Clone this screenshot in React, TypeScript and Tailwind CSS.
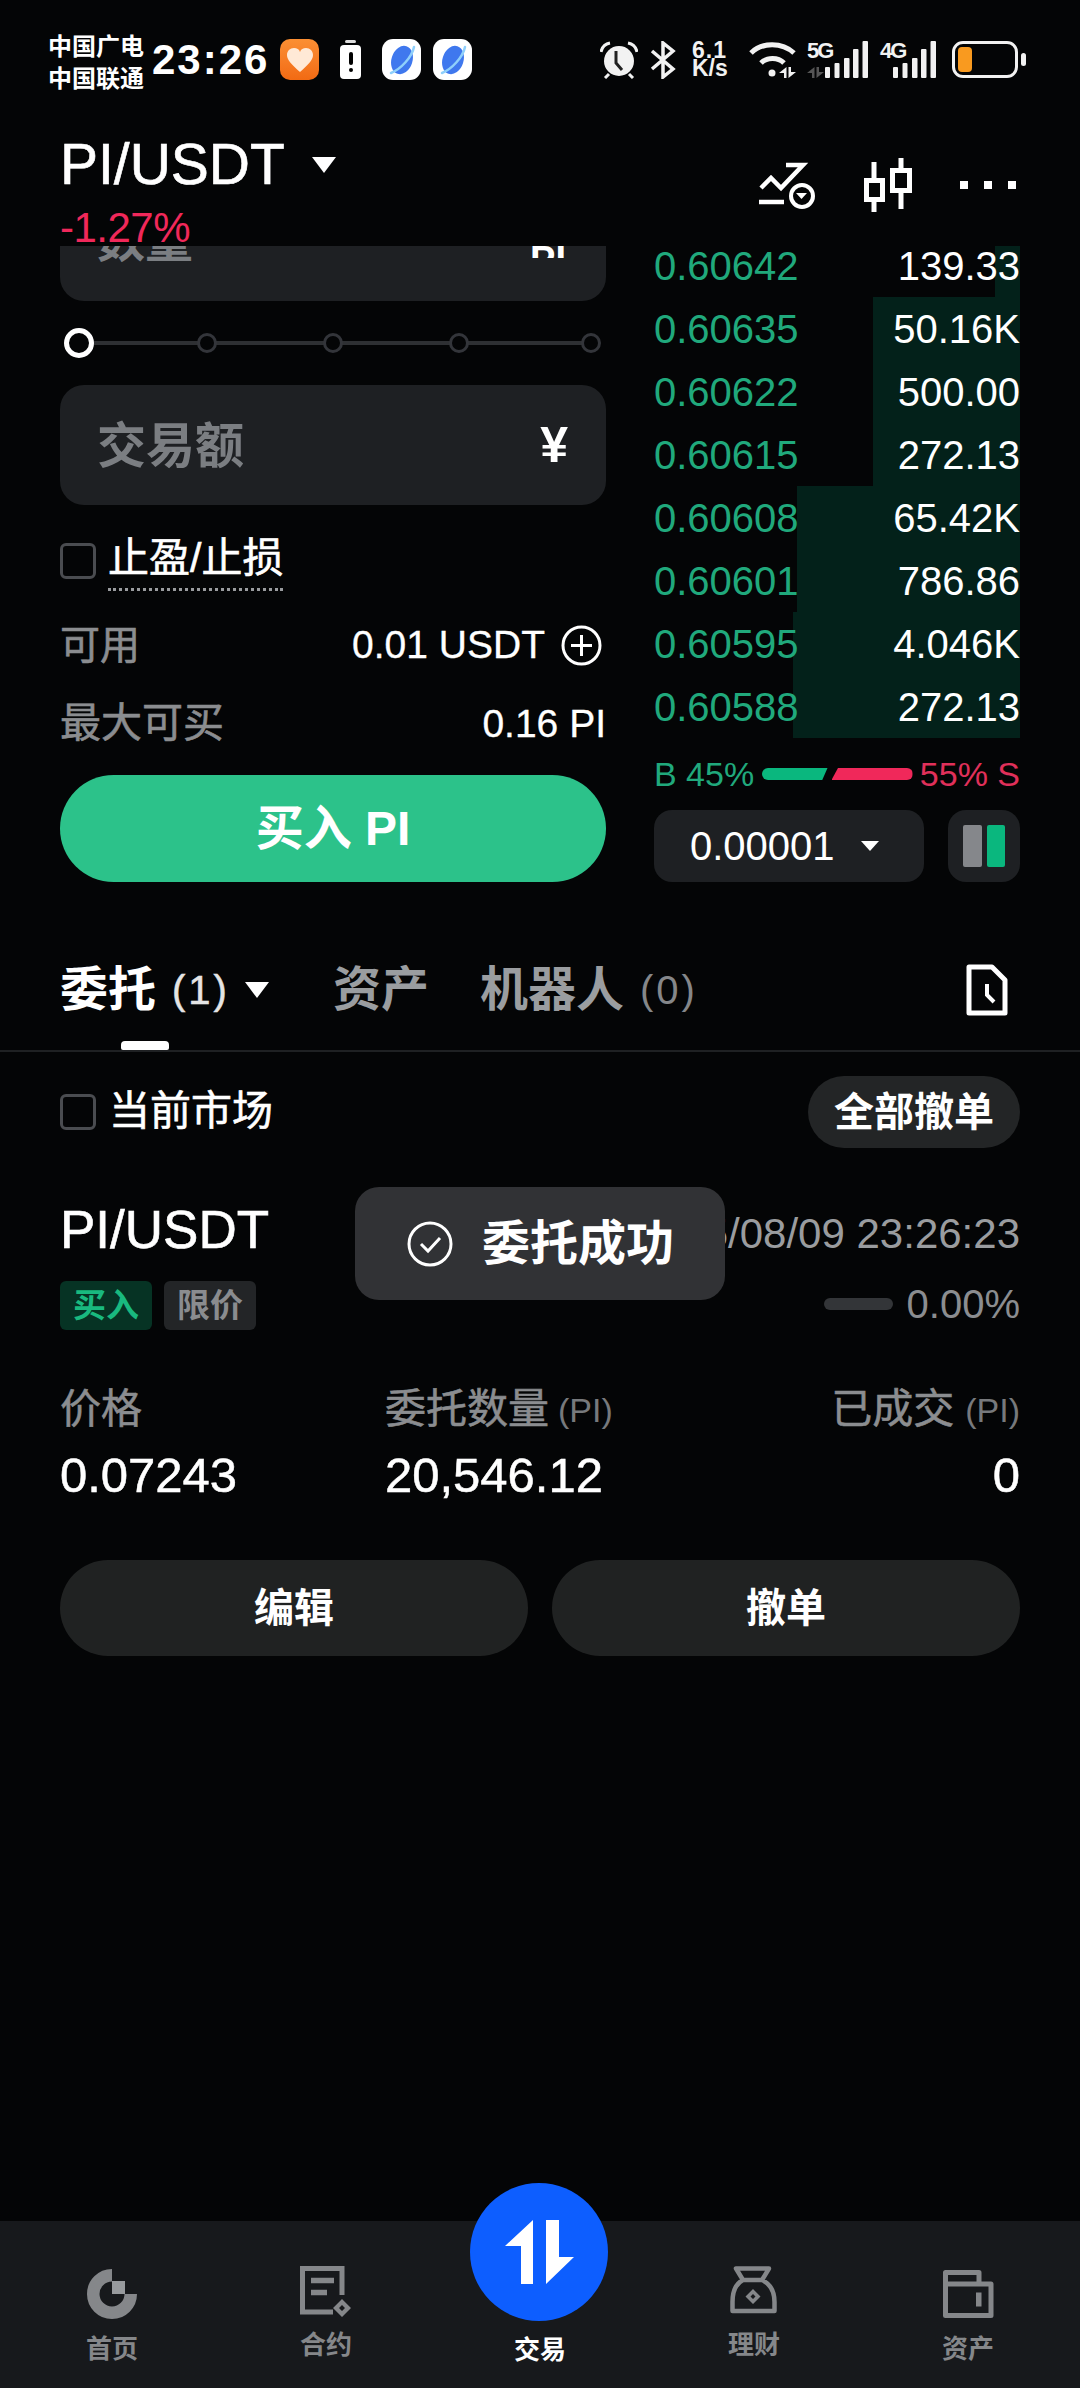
import React from 'react';

const orderBook = [
  { price: '0.60642', size: '139.33', depth: 25 },
  { price: '0.60635', size: '50.16K', depth: 147 },
  { price: '0.60622', size: '500.00', depth: 147 },
  { price: '0.60615', size: '272.13', depth: 147 },
  { price: '0.60608', size: '65.42K', depth: 223 },
  { price: '0.60601', size: '786.86', depth: 223 },
  { price: '0.60595', size: '4.046K', depth: 227 },
  { price: '0.60588', size: '272.13', depth: 227 },
];

const SignalBars = () => (
  <svg width="43" height="37" viewBox="0 0 43 37" fill="#f2f2f2">
    <rect x="0" y="26" width="5" height="11" rx="1" />
    <rect x="9.5" y="22" width="5" height="15" rx="1" />
    <rect x="19" y="17" width="5.5" height="20" rx="1" />
    <rect x="28" y="8" width="5.5" height="29" rx="1" />
    <rect x="37.5" y="0" width="5.5" height="37" rx="1" />
  </svg>
);

const DataArrows = ({ color }: { color: string }) => (
  <svg width="17" height="11" viewBox="0 0 17 11" fill={color}>
    <path d="M7.5 0v11H5V6H0zM9.5 0H12v5h5l-7.5 6z" />
  </svg>
);

const PlanetApp = () => (
  <div className="w-[39px] h-[41px] rounded-[11px] bg-white flex items-center justify-center">
    <svg width="30" height="34" viewBox="0 0 30 34">
      <ellipse cx="15" cy="17" rx="10.5" ry="14.5" transform="rotate(18 15 17)" fill="#3f78ee" />
      <path d="M4 30C14 26 25 14 27 4" stroke="#8fd0fb" strokeWidth="2.5" fill="none" strokeLinecap="round" />
    </svg>
  </div>
);

const StatusBar = () => (
  <div className="h-[120px] pl-[48px] pr-[54px] pt-[31px] flex items-start">
    <div className="w-[104px] text-[24px] leading-[32px] font-bold text-white">
      <div>中国广电</div>
      <div>中国联通</div>
    </div>
    <span className="mt-[5px] text-[42px] leading-[48px] font-bold tracking-[2px] text-white">23:26</span>
    <div className="ml-[11px] mt-[8px] flex items-center">
      <div className="w-[39px] h-[41px] rounded-[10px] bg-gradient-to-b from-[#fb8f33] to-[#f26a12] flex items-center justify-center">
        <svg width="28" height="26" viewBox="0 0 28 26">
          <path d="M14 25C6 18 1 13 1 8c0-4 3-7 7-7 3 0 5 1 6 4 1-3 3-4 6-4 4 0 7 3 7 7 0 5-5 10-13 17z" fill="#ffe9d6" />
        </svg>
      </div>
      <div className="ml-[21px] w-[21px] h-[39px] relative flex flex-col items-center">
        <div className="w-[11px] h-[3px] bg-[#ddd] rounded-sm" />
        <div className="mt-[2px] w-[21px] h-[34px] bg-white rounded-[4px] flex flex-col items-center justify-center gap-[3px]">
          <div className="w-[4px] h-[13px] bg-black rounded-sm" />
          <div className="w-[4px] h-[4px] bg-black rounded-full" />
        </div>
      </div>
      <div className="ml-[21px]"><PlanetApp /></div>
      <div className="ml-[12px]"><PlanetApp /></div>
    </div>
    <div className="ml-auto mt-[10px] flex items-start">
      <svg width="38" height="38" viewBox="0 0 38 38" fill="none" stroke="#f2f2f2">
        <circle cx="19" cy="20" r="15" fill="#f2f2f2" stroke="none" />
        <path d="M16 10v12l6 7" stroke="#222" strokeWidth="3" />
        <path d="M1 11c1-5 4-8 9-9M37 11c-1-5-4-8-9-9M9 33l-4 4M29 33l4 4" strokeWidth="3" />
      </svg>
      <svg className="ml-[12px]" width="26" height="38" viewBox="0 0 26 38" fill="none" stroke="#f2f2f2" strokeWidth="3.5">
        <path d="M2 10l21 18-10 8V2l10 8L2 28" />
      </svg>
      <div className="ml-[16px] w-[40px] text-[23px] leading-[18px] font-bold text-[#f2f2f2]">
        <div className="tracking-[1px]">6.1</div>
        <div>K/s</div>
      </div>
      <div className="ml-[17px] relative w-[47px] h-[37px]">
        <svg width="47" height="37" viewBox="0 0 47 37" fill="none" stroke="#f2f2f2" strokeWidth="5">
          <path d="M2 12C13 1 33 1 45 12M12 22c6-6 17-6 23 0" />
          <circle cx="23" cy="32" r="3.5" fill="#f2f2f2" stroke="none" />
        </svg>
        <div className="absolute left-[30px] top-[26px]"><DataArrows color="#f2f2f2" /></div>
      </div>
      <div className="ml-[11px] relative w-[62px] h-[37px]">
        <span className="absolute left-0 top-0 text-[22px] leading-[20px] font-bold tracking-[-2px] text-[#f2f2f2]">5G</span>
        <div className="absolute left-0 top-[26px]"><DataArrows color="#555555" /></div>
        <div className="absolute right-[1px] top-0"><SignalBars /></div>
      </div>
      <div className="ml-[11px] relative w-[57px] h-[37px]">
        <span className="absolute left-0 top-0 text-[22px] leading-[20px] font-bold tracking-[-2px] text-[#f2f2f2]">4G</span>
        <div className="absolute right-[1px] top-0"><SignalBars /></div>
      </div>
      <div className="ml-[15px] flex items-center">
        <div className="w-[66px] h-[37px] rounded-[11px] border-[3px] border-[#f2f2f2] p-[3px]">
          <div className="w-[14px] h-full rounded-[4px] bg-[#f99a1f]" />
        </div>
        <div className="ml-[3px] w-[5px] h-[13px] rounded-full bg-[#f2f2f2]" />
      </div>
    </div>
  </div>
);

const Header = () => (
  <div className="h-[126px] relative overflow-hidden px-[60px] text-white">
    <div className="flex items-start h-[88px]">
      <span className="h-[88px] flex items-center text-[57px] leading-none [-webkit-text-stroke:0.6px_currentColor]">PI/USDT</span>
      <div className="ml-[27px] mt-[37px] w-0 h-0 border-x-[12px] border-x-transparent border-t-[16px] border-t-white" />
      <svg className="ml-auto mt-[42px]" width="60" height="48" viewBox="0 0 60 48" fill="none" stroke="#fff" strokeWidth="4.5">
        <path d="M4 26l10-10 10 10L46 3H29" />
        <path d="M2 40h25" />
        <circle cx="45" cy="34" r="11" strokeWidth="4" />
        <path d="M39 31h11l-5.5 6z" fill="#fff" stroke="none" />
      </svg>
      <svg className="ml-[44px] mt-[36px]" width="54" height="58" viewBox="0 0 54 58" fill="none" stroke="#fff" strokeWidth="5">
        <rect x="5.5" y="24.5" width="16" height="19" />
        <path d="M13 6v18.5M13 43.5V56" />
        <rect x="31.5" y="14.5" width="17" height="20" />
        <path d="M40 2v12.5M40 34.5V53" />
      </svg>
      <div className="ml-[45px] mr-[4px] mt-[61px] flex gap-[16px]">
        <div className="w-[8px] h-[8px] bg-white" />
        <div className="w-[8px] h-[8px] bg-white" />
        <div className="w-[8px] h-[8px] bg-white" />
      </div>
    </div>
    <div className="text-[42px] leading-[40px] tracking-[-0.5px] text-[#f0285a]">-1.27%</div>
  </div>
);

const SliderNode = () => <div className="w-[20px] h-[20px] rounded-full border-[3px] border-[#33353a] bg-[#040506]" />;

const TradeForm = () => (
  <div className="overflow-hidden h-[636px]">
    <div className="-mt-[65px]">
      <div className="relative h-[120px] rounded-[24px] bg-[#1e2023] flex items-center pl-[37px]">
        <span className="text-[48px] font-bold text-[#7b7e82]">数量</span>
        <span className="absolute right-[40px] top-[65px] h-[12px] overflow-hidden text-[38px] leading-none font-bold text-white">
          <span className="block -mt-[5px]">PI</span>
        </span>
      </div>
      <div className="relative mt-[27px] h-[30px] flex items-center pl-[4px]">
        <div className="absolute left-[30px] right-[10px] top-[13px] h-[4px] bg-[#2e3033]" />
        <div className="relative w-[30px] h-[30px] rounded-full border-[5px] border-white bg-[#040506]" />
        <div className="relative ml-[103px] flex gap-[106px]">
          <SliderNode />
          <SliderNode />
          <SliderNode />
        </div>
        <div className="relative ml-[112px]"><SliderNode /></div>
      </div>
      <div className="mt-[27px] h-[120px] rounded-[24px] bg-[#1e2023] flex items-center justify-between pl-[37px] pr-[38px]">
        <span className="mt-[3px] text-[49px] font-bold text-[#7b7e82]">交易额</span>
        <span className="text-[50px] font-bold text-white">¥</span>
      </div>
      <div className="mt-[38px] h-[48px] flex items-start">
        <div className="w-[36px] h-[36px] rounded-[6px] border-[3px] border-[#4a4c50]" />
        <span className="ml-[12px] h-[48px] text-[41px] leading-[30px] text-white border-b-[3px] border-dotted border-[#9a9c9f] [-webkit-text-stroke:0.6px_currentColor]">止盈/止损</span>
      </div>
      <div className="mt-[29px] h-[50px] flex items-center justify-between">
        <span className="text-[40px] text-[#8b8d90] [-webkit-text-stroke:0.6px_currentColor]">可用</span>
        <div className="flex items-center text-white">
          <span className="text-[39px] [-webkit-text-stroke:0.3px_currentColor]">0.01 USDT</span>
          <svg className="ml-[16px] mr-[4px]" width="41" height="41" viewBox="0 0 41 41" fill="none" stroke="#fff" strokeWidth="3">
            <circle cx="20.5" cy="20.5" r="18.5" />
            <path d="M10 20.5h21M20.5 10v21" />
          </svg>
        </div>
      </div>
      <div className="mt-[29px] h-[50px] flex items-center justify-between">
        <span className="text-[41px] text-[#8b8d90] [-webkit-text-stroke:0.6px_currentColor]">最大可买</span>
        <span className="text-[39px] text-white [-webkit-text-stroke:0.3px_currentColor]">0.16 PI</span>
      </div>
      <button className="mt-[26px] w-full h-[107px] rounded-full bg-[#2cc28a] text-[48px] font-bold text-white">买入 PI</button>
    </div>
  </div>
);

const OrderBook = () => (
  <div className="overflow-hidden h-[636px] text-[40px]">
    <div className="-mt-[12px]">
      {orderBook.map((row) => (
        <div key={row.price} className="relative h-[63px] flex items-center justify-between">
          <div className="absolute right-0 top-0 bottom-0 bg-[#03211a]" style={{ width: row.depth }} />
          <span className="relative text-[#20a97c]">{row.price}</span>
          <span className="relative text-white">{row.size}</span>
        </div>
      ))}
    </div>
    <div className="mt-[16px] h-[40px] flex items-center justify-between text-[34px]">
      <span className="text-[#20a97c]">B 45%</span>
      <div className="flex items-center gap-[4px]">
        <div className="w-[66px] h-[12px] bg-[#0ab77e] rounded-l-full [clip-path:polygon(0_0,100%_0,92%_100%,0_100%)]" />
        <div className="w-[81px] h-[12px] bg-[#f0285a] rounded-r-full [clip-path:polygon(8%_0,100%_0,100%_100%,0_100%)]" />
      </div>
      <span className="text-[#e0305a]">55% S</span>
    </div>
    <div className="mt-[16px] flex justify-between">
      <div className="w-[270px] h-[72px] rounded-[18px] bg-[#1e2023] flex items-center pl-[36px] text-white">
        <span>0.00001</span>
        <div className="ml-[26px] w-0 h-0 border-x-[9px] border-x-transparent border-t-[10px] border-t-white" />
      </div>
      <div className="w-[72px] h-[72px] rounded-[18px] bg-[#1e2023] flex items-center justify-center gap-[5px]">
        <div className="w-[19px] h-[42px] rounded-[2px] bg-[#85878b]" />
        <div className="w-[18px] h-[42px] rounded-[2px] bg-[#0ab77e]" />
      </div>
    </div>
  </div>
);

const Tabs = () => (
  <div className="relative h-[170px] pt-[84px] border-b-2 border-[#1f2123] px-[60px]">
    <div className="flex items-center h-[48px]">
      <span className="text-[48px] font-bold text-white">委托</span>
      <span className="ml-[16px] text-[40px] tracking-[3px] text-[#e5e5e5] [-webkit-text-stroke:0.5px_currentColor]">(1)</span>
      <div className="ml-[15px] w-0 h-0 border-x-[12px] border-x-transparent border-t-[16px] border-t-white" />
      <span className="ml-[64px] text-[48px] font-bold text-[#9a9da0]">资产</span>
      <span className="ml-[51px] text-[48px] font-bold text-[#9a9da0]">机器人</span>
      <span className="ml-[16px] text-[40px] tracking-[3px] text-[#85878a]">(0)</span>
      <svg className="ml-auto mr-[12px]" width="42" height="52" viewBox="0 0 42 52" fill="none" stroke="#fff" strokeWidth="5">
        <path d="M3 3h23l13 13v33H3z" strokeLinejoin="round" />
        <path d="M21 20v11l7 7" strokeWidth="4" />
      </svg>
    </div>
    <div className="absolute left-[121px] bottom-0 w-[48px] h-[9px] rounded-t-[4px] rounded-b-[2px] bg-white" />
  </div>
);

const OrderCard = () => (
  <div className="px-[60px]">
    <div className="mt-[24px] h-[72px] flex items-center justify-between">
      <div className="flex items-center">
        <div className="w-[36px] h-[36px] rounded-[6px] border-[3px] border-[#4a4c50]" />
        <span className="ml-[13px] text-[41px] text-white [-webkit-text-stroke:0.6px_currentColor]">当前市场</span>
      </div>
      <button className="w-[212px] h-[72px] rounded-full bg-[#232526] text-[40px] font-bold text-white">全部撤单</button>
    </div>
    <div className="mt-[56px] h-[52px] flex items-center justify-between">
      <span className="text-[53px] text-white [-webkit-text-stroke:0.6px_currentColor]">PI/USDT</span>
      <span className="text-[42px] mt-[6px] text-[#9a9c9f]">2025/08/09 23:26:23</span>
    </div>
    <div className="mt-[25px] h-[49px] flex items-center justify-between">
      <div className="flex gap-[12px]">
        <span className="w-[92px] h-[49px] rounded-[6px] bg-[#063324] text-[#19b97f] text-[33px] font-bold flex items-center justify-center">买入</span>
        <span className="w-[92px] h-[49px] rounded-[6px] bg-[#232527] text-[#8a8c8f] text-[33px] font-bold flex items-center justify-center">限价</span>
      </div>
      <div className="flex items-center -mt-[3px]">
        <div className="w-[69px] h-[12px] rounded-full bg-[#333538]" />
        <span className="ml-[14px] text-[40px] text-[#8b8d90]">0.00%</span>
      </div>
    </div>
    <div className="mt-[60px] grid grid-cols-[325px_1fr_auto]">
      <span className="h-[40px] flex items-center text-[41px] text-[#8b8d90] [-webkit-text-stroke:0.6px_currentColor]">价格</span>
      <span className="h-[40px] flex items-center text-[41px] text-[#8b8d90] [-webkit-text-stroke:0.6px_currentColor]">委托数量<span className="ml-[9px] text-[34px] text-[#77797c] [-webkit-text-stroke:0px]">(PI)</span></span>
      <span className="h-[40px] flex items-center text-[41px] text-[#8b8d90] [-webkit-text-stroke:0.6px_currentColor]">已成交<span className="ml-[11px] text-[34px] text-[#77797c] [-webkit-text-stroke:0px]">(PI)</span></span>
      <span className="mt-[22px] h-[48px] flex items-center text-[49px] text-white [-webkit-text-stroke:0.5px_currentColor]">0.07243</span>
      <span className="mt-[22px] h-[48px] flex items-center text-[49px] text-white [-webkit-text-stroke:0.5px_currentColor]">20,546.12</span>
      <span className="mt-[22px] h-[48px] flex items-center justify-end text-[49px] text-white [-webkit-text-stroke:0.5px_currentColor]">0</span>
    </div>
    <div className="mt-[60px] flex gap-[24px]">
      <button className="flex-1 h-[96px] rounded-full bg-[#202222] text-[40px] font-bold text-white">编辑</button>
      <button className="flex-1 h-[96px] rounded-full bg-[#202222] text-[40px] font-bold text-white">撤单</button>
    </div>
  </div>
);

const NavItem = ({ label, icon, up }: { label: string; icon: React.ReactNode; up?: boolean }) => (
  <div className="flex flex-col items-center w-[120px]">
    <div className="h-[56px] flex items-end">{icon}</div>
    <span className={`text-[26px] font-bold text-[#85878a] ${up ? 'mt-[8px]' : 'mt-[12px]'}`}>{label}</span>
  </div>
);

const BottomNav = () => (
  <div className="mt-auto relative h-[167px] bg-[#17191c] flex justify-between px-[52px] pt-[41px]">
    <NavItem
      label="首页"
      icon={
        <svg className="-mb-[1px]" width="50" height="50" viewBox="0 0 50 50" fill="none">
          <path d="M25 6.25A18.75 18.75 0 1 0 43.75 25" stroke="#85878a" strokeWidth="12.5" />
          <rect x="25" y="12" width="13" height="13" fill="#979a9d" />
        </svg>
      }
    />
    <NavItem
      up
      label="合约"
      icon={
        <svg className="mb-[1px]" width="54" height="52" viewBox="0 0 54 52" fill="none" stroke="#85878a" strokeWidth="5">
          <path d="M34 47H3.5V3.5H43V30" />
          <path d="M12 15.5h23M12 27.5h16" strokeWidth="5.5" />
          <path fillRule="evenodd" d="M43 34l9 9-9 9-9-9zM43 40l-3 3 3 3 3-3z" fill="#85878a" stroke="none" />
        </svg>
      }
    />
    <div className="w-[120px] flex flex-col items-center">
      <div className="h-[56px]" />
      <span className="mt-[13px] text-[26px] font-bold text-white">交易</span>
    </div>
    <NavItem
      up
      label="理财"
      icon={
        <svg className="mb-[3px]" width="52" height="50" viewBox="0 0 52 50" fill="none" stroke="#85878a" strokeWidth="4.5">
          <path d="M8 3.5h33L34 15H15zM15 15C7 19 4.5 27 4.5 37v9h42v-9c0-10-4-18-12.5-22" strokeLinejoin="round" />
          <path fillRule="evenodd" d="M25 24l7.5 7.5L25 39l-7.5-7.5zM25 29l-2.5 2.5L25 34l2.5-2.5z" fill="#85878a" stroke="none" />
        </svg>
      }
    />
    <NavItem
      label="资产"
      icon={
        <svg width="54" height="50" viewBox="0 0 54 50" fill="none" stroke="#85878a" strokeWidth="5">
          <path d="M4.5 47.5V4.5H38V16M4.5 16H50v31.500H4.500z" strokeLinejoin="round" />
          <rect x="35" y="24.500" width="5.500" height="14" fill="#85878a" stroke="none" />
        </svg>
      }
    />
    <div className="absolute left-[470px] -top-[38px] w-[138px] h-[138px] rounded-full bg-[#0d5eff] flex items-center justify-center">
      <svg width="69" height="64" viewBox="0 0 69 64" fill="#fff">
        <path d="M28 0v64H16V26H0zM41 0h13v37h15L41 64z" />
      </svg>
    </div>
  </div>
);

const Toast = () => (
  <div className="absolute left-[355px] top-[1187px] w-[370px] h-[113px] rounded-[24px] bg-[#313235] flex items-center pl-[52px] text-white">
    <svg width="46" height="46" viewBox="0 0 46 46" fill="none" stroke="#fff" strokeWidth="3">
      <circle cx="23" cy="23" r="21" />
      <path d="M14 23l7 7 12-13" />
    </svg>
    <span className="ml-[29px] text-[48px] font-bold">委托成功</span>
  </div>
);

export default function App() {
  return (
    <div className="relative w-[1080px] h-[2388px] overflow-hidden flex flex-col bg-[#040506] font-['Liberation_Sans','Noto_Sans_CJK_SC',sans-serif]">
      <StatusBar />
      <Header />
      <div className="px-[60px] grid grid-cols-[546px_366px] gap-x-[48px]">
        <TradeForm />
        <OrderBook />
      </div>
      <Tabs />
      <OrderCard />
      <BottomNav />
      <Toast />
    </div>
  );
}
